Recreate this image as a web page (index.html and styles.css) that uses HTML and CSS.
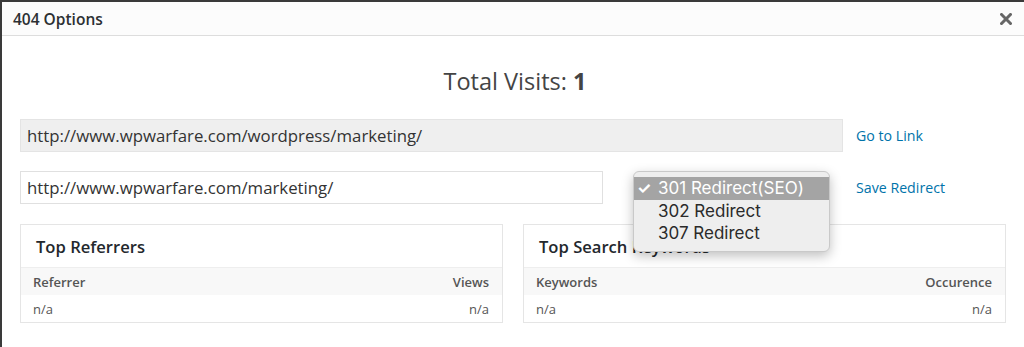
FILE: index.html
```html
<!DOCTYPE html>
<html>
<head>
<meta charset="utf-8">
<link rel="stylesheet" href="styles.css">
</head>
<body>
<div class="modal">
  <div class="modal-header">
    <h1 class="modal-title">404 Options</h1>
    <span class="close">
      <svg width="12" height="12" viewBox="0 0 12 12"><path d="M1.5 1.5 L10.5 10.5 M10.5 1.5 L1.5 10.5" stroke="#666" stroke-width="3" stroke-linecap="square"/></svg>
    </span>
  </div>
  <div class="modal-body">
    <h2 class="visits">Total Visits: <b>1</b></h2>
    <div class="row row-one">
      <div class="field field-readonly">http://www.wpwarfare.com/wordpress/marketing/</div>
      <a class="link">Go to Link</a>
    </div>
    <div class="row row-two">
      <div class="field">http://www.wpwarfare.com/marketing/</div>
      <div class="select-cell">
        <div class="select">
          <div class="menu">
            <div class="menu-item active"><span class="check">✓</span>301 Redirect(SEO)</div>
            <div class="menu-item"><span class="check"></span>302 Redirect</div>
            <div class="menu-item"><span class="check"></span>307 Redirect</div>
          </div>
        </div>
      </div>
      <a class="link">Save Redirect</a>
    </div>
    <div class="panels">
      <div class="panel">
        <div class="panel-title">Top Referrers</div>
        <div class="table-head"><span>Referrer</span><span>Views</span></div>
        <div class="table-row"><span>n/a</span><span>n/a</span></div>
      </div>
      <div class="panel">
        <div class="panel-title">Top Search Keywords</div>
        <div class="table-head"><span>Keywords</span><span>Occurence</span></div>
        <div class="table-row"><span>n/a</span><span>n/a</span></div>
      </div>
    </div>
  </div>
</div>
</body>
</html>
```

FILE: styles.css
```css
html, body {
  margin: 0;
  padding: 0;
  height: 100%;
  overflow: hidden;
}
body {
  background: #3a3a3a;
  font-family: "Open Sans", "Liberation Sans", sans-serif;
  color: #444;
}
.modal {
  margin: 2px 0 0 2px;
  width: 1022px;
  height: 400px;
  background: #fff;
}
.modal-header {
  height: 33px;
  background: #fcfcfc;
  border-bottom: 1px solid #dddddd;
  display: flex;
  align-items: center;
  justify-content: space-between;
  padding: 0 12px 0 11px;
}
.modal-title {
  margin: 0;
  font-size: 15.5px;
  font-weight: 600;
  color: #2c3033;
}
.close {
  display: flex;
  margin-top: 1px;
}
.modal-body {
  padding: 29px 16px 0 18px;
}
.visits {
  margin: 0 0 22px;
  text-align: center;
  font-size: 23.5px;
  font-weight: 400;
  color: #444;
  line-height: 32px;
  padding-left: 2px;
}
.visits b {
  font-weight: 700;
}
.row {
  display: grid;
  align-items: center;
  column-gap: 13px;
}
.row-one {
  grid-template-columns: 823px 1fr;
  margin-bottom: 19px;
}
.row-two {
  grid-template-columns: 583px 227px 1fr;
  margin-bottom: 20px;
}
.field {
  box-sizing: border-box;
  height: 33px;
  border: 1px solid #e0e0e0;
  background: #fff;
  font-size: 16.8px;
  color: #333;
  padding: 0 6px;
  line-height: 31px;
  white-space: nowrap;
  overflow: hidden;
}
.field-readonly {
  background: #efefef;
  border-color: #e4e4e4;
}
.link {
  font-size: 14.2px;
  color: #0073aa;
  text-decoration: none;
}
.select-cell {
  display: flex;
  justify-content: center;
  align-self: start;
}
.select {
  position: relative;
  width: 167px;
  height: 28px;
  border-top: 1px solid #7fa8cc;
  box-sizing: border-box;
  margin-left: 2px;
}
.menu {
  position: absolute;
  left: -14px;
  top: -1px;
  width: 197px;
  box-sizing: border-box;
  padding: 5px 0 6px;
  background: #eeeeee;
  border: 1px solid #c9c9c9;
  border-radius: 6px;
  box-shadow: 0 4px 12px rgba(0, 0, 0, 0.25);
  font-family: "Inter", "Liberation Sans", sans-serif;
  font-size: 17px;
  color: #2a2a2a;
  z-index: 2;
}
.menu-item {
  display: flex;
  align-items: center;
  height: 22.5px;
  line-height: 22px;
}
.menu-item.active {
  background: #a4a4a4;
  color: #fff;
}
.check {
  width: 24px;
  padding-left: 3px;
  box-sizing: border-box;
  font-size: 16px;
  font-weight: 700;
}
.panels {
  display: grid;
  grid-template-columns: 483px 483px;
  column-gap: 20px;
}
.panel {
  border: 1px solid #e5e5e5;
  background: #fff;
}
.panel-title {
  height: 43px;
  box-sizing: border-box;
  padding: 0 0 0 15px;
  display: flex;
  align-items: center;
  font-size: 16.6px;
  font-weight: 600;
  color: #23282d;
  border-bottom: 1px solid #eeeeee;
}
.table-head,
.table-row {
  display: flex;
  justify-content: space-between;
  align-items: center;
  height: 27px;
  padding: 0 13px 0 12px;
  font-size: 13px;
}
.table-head {
  background: #f8f8f8;
  font-weight: 600;
  color: #555;
}
.table-row {
  color: #555;
}
```
